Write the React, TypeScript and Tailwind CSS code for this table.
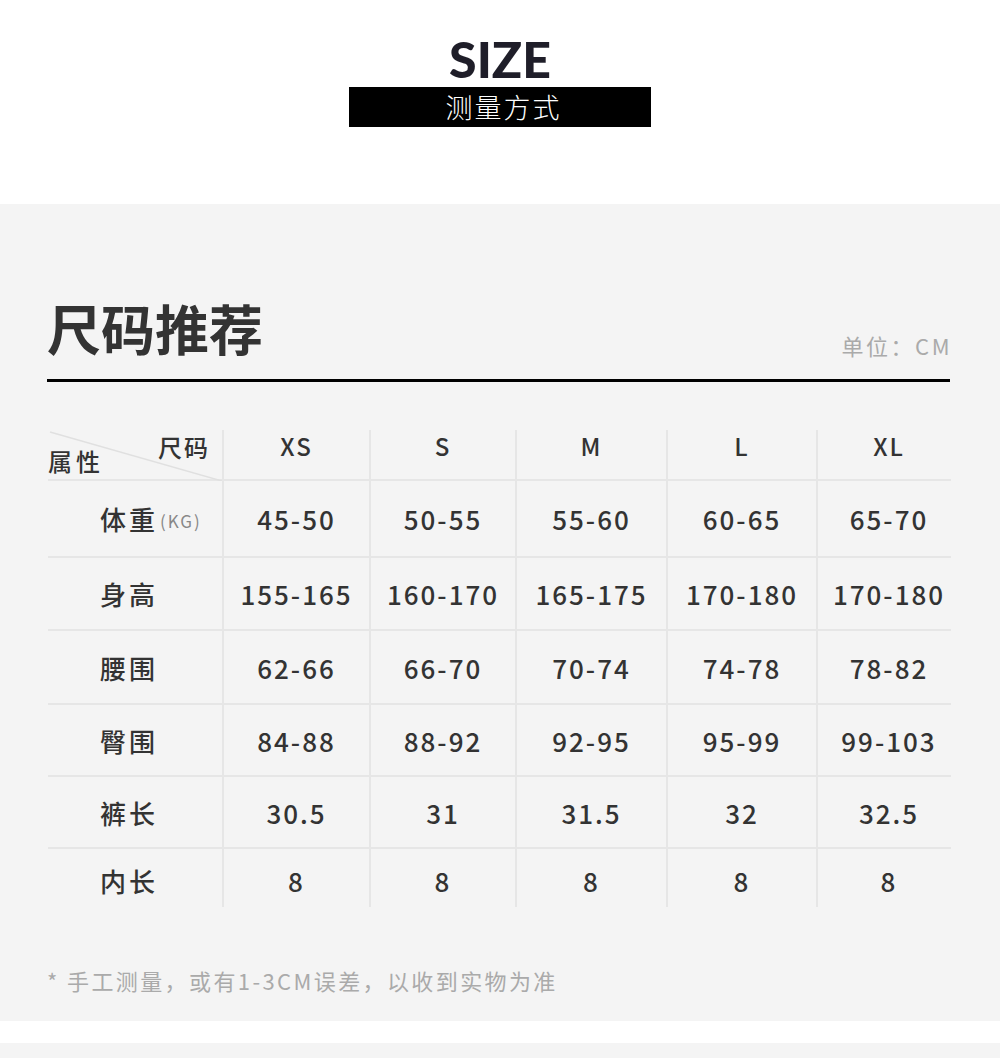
import React from "react";

const cjk = { fontFamily: '"Noto Sans CJK SC", "Noto Sans", sans-serif' };

const cols = ["XS", "S", "M", "L", "XL"];
const rows: { label: string; unit?: string; values: string[]; h: string }[] = [
  { label: "体重", unit: "(KG)", values: ["45-50", "50-55", "55-60", "60-65", "65-70"], h: "h-[77px]" },
  { label: "身高", values: ["155-165", "160-170", "165-175", "170-180", "170-180"], h: "h-[73px]" },
  { label: "腰围", values: ["62-66", "66-70", "70-74", "74-78", "78-82"], h: "h-[74px]" },
  { label: "臀围", values: ["84-88", "88-92", "92-95", "95-99", "99-103"], h: "h-[72px]" },
  { label: "裤长", values: ["30.5", "31", "31.5", "32", "32.5"], h: "h-[72px]" },
  { label: "内长", values: ["8", "8", "8", "8", "8"], h: "h-[58px]" },
];

const grid = "grid grid-cols-[174px_147px_146px_151px_150px_134px]";

export default function App() {
  return (
    <div className="w-[1000px] h-[1058px] bg-white overflow-hidden" style={cjk}>
      {/* Top */}
      <div className="h-[204px] flex flex-col items-center pt-[33px]">
        <div
          className="h-[52px] text-[50px] leading-[52px] font-black text-[#1f1e29]"
          style={{ fontFamily: 'Lato, "Noto Sans", sans-serif' }}
        >
          SIZE
        </div>
        <div className="mt-[2px] w-[302px] h-[40px] bg-black text-white flex items-center justify-center text-[27px] leading-[34px] font-light tracking-[2px] pl-[7px]">
          测量方式
        </div>
      </div>

      {/* Panel */}
      <div className="h-[817px] bg-[#f4f4f4] pl-[47px] pr-[50px] pt-[90px]">
        <div className="flex items-end justify-between border-b-[3px] border-black pb-[17px]">
          <div className="text-[54px] leading-[68px] font-bold text-[#333]">尺码推荐</div>
          <div className="text-[22px] leading-[30px] text-[#aaa] tracking-[2.5px] pb-[2px] -mr-[2px]">单位：CM</div>
        </div>

        <div className="mt-[48px] w-[903px] ml-[1px]">
          {/* header */}
          <div className={`${grid} h-[51px] border-b-2 border-[#e6e6e6]`}>
            <div className="relative">
              <svg className="absolute inset-0" width="174" height="51">
                <line x1="2" y1="2" x2="174" y2="51" stroke="#e0e0e0" strokeWidth="1.5" />
              </svg>
              <span className="absolute left-[110px] top-[2px] text-[24px] leading-[30px] font-medium text-[#333] tracking-[2px]">尺码</span>
              <span className="absolute left-0 top-[16px] text-[24px] leading-[30px] font-medium text-[#333] tracking-[4px]">属性</span>
            </div>
            {cols.map((c, j) => (
              <div
                key={c}
                className={`border-l-2 border-[#e6e6e6] flex justify-center pt-[1px] text-[24px] leading-[30px] font-medium text-[#333] tracking-[2px] ${j === 4 ? "pl-[10px]" : ""}`}
              >
                {c}
              </div>
            ))}
          </div>
          {rows.map((r, i) => {
            const last = i === rows.length - 1;
            return (
              <div
                key={r.label}
                className={`${grid} ${r.h} ${last ? "" : "border-b-2 border-[#e6e6e6]"}`}
              >
                <div className={`flex items-center pl-[52px] text-[#333] ${last ? "pt-[4px]" : ""}`}>
                  <span className="text-[26px] font-medium tracking-[3px]">{r.label}</span>
                  {r.unit && <span className="text-[17px] text-[#888] tracking-[2px] mt-[4px] ml-[2px]">{r.unit}</span>}
                </div>
                {r.values.map((v, j) => (
                  <div
                    key={j}
                    className={`border-l-2 border-[#e6e6e6] flex items-center justify-center text-[26px] font-medium text-[#333] tracking-[2px] ${last ? "pt-[4px]" : ""} ${j === 4 ? "pl-[10px]" : ""}`}
                  >
                    {v}
                  </div>
                ))}
              </div>
            );
          })}
        </div>

        <div className="mt-[58px] text-[22px] leading-[30px] text-[#aaa] tracking-[2.4px]">
          * 手工测量，或有1-3CM误差，以收到实物为准
        </div>
      </div>
      <div className="h-[22px] bg-white" />
      <div className="h-[15px] bg-[#f4f4f4]" />
    </div>
  );
}
